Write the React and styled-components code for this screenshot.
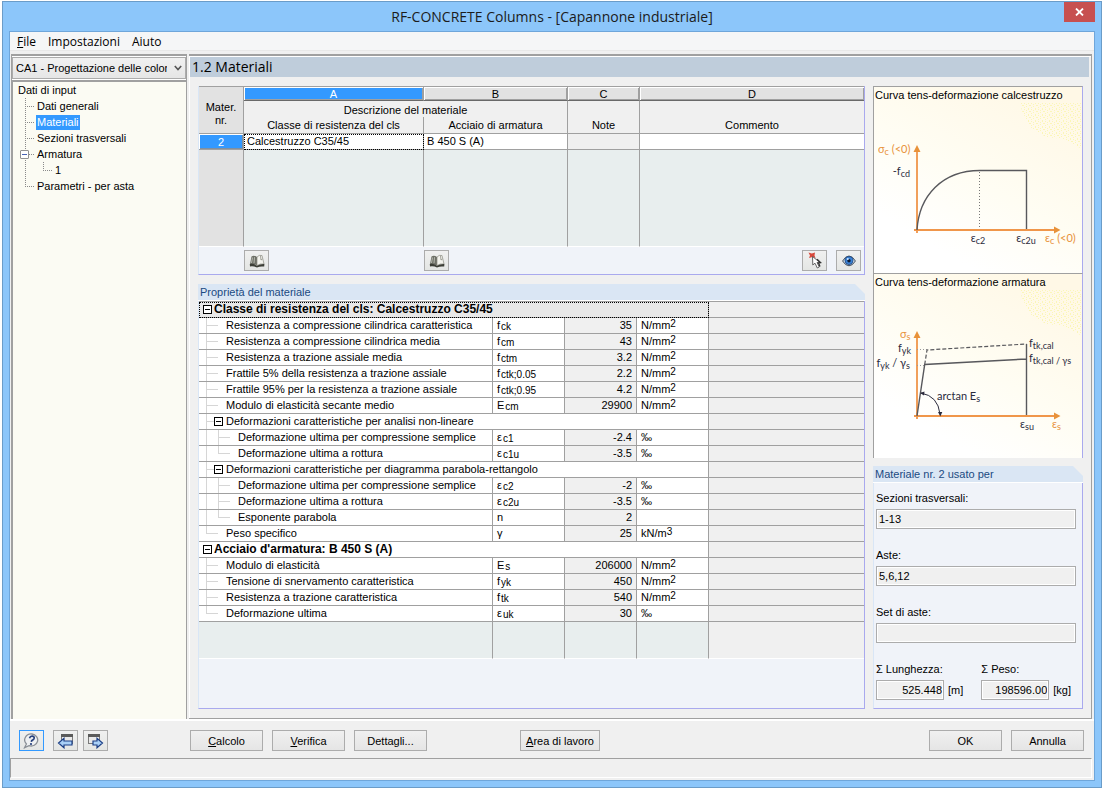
import { useState } from 'react';
import styled, { createGlobalStyle } from 'styled-components';

const GlobalStyle = createGlobalStyle`
    *{
        box-sizing: border-box;
    }
    body{
        margin:0;
        background-color: white;
        color:#000;
        font-family: 'Liberation Sans', Arial, sans-serif;
        font-size: 11px;
        line-height: 14px;
    }
    button, input, select{
        font:inherit;
        color:inherit;
        border-radius: 0;
        margin:0;
    }
`

const Page = styled.div`
    min-height: 100vh;
    padding: 1px 0 0 2px;
    display: flex;
`

const Window = styled.div`
    flex:1;
    min-width: 0;
    display: flex;
    flex-direction: column;
    padding: 0 6px 6px;
    border:1px solid #6b9cc8;
    background-color: #8cc6fa;
`

const TitleBar = styled.header`
    display: grid;
    grid-template-columns: 31px 1fr 31px;
    height: 29px;
    h1{
        margin:0;
        font-family: 'Open Sans', sans-serif;
        font-size: 14px;
        font-weight: 400;
        line-height: 29px;
        text-align: center;
        color:#1b1b1b;
    }
`

const CloseButton = styled.button`
    grid-column: 3;
    height: 20px;
    padding: 0;
    border:0;
    background-color: #c75050;
    display: flex;
    align-items: center;
    justify-content: center;
`

const Client = styled.div`
    flex:1;
    display: flex;
    flex-direction: column;
    border:1px solid #6fa6da;
    background-color: #f0f0f0;
`

const MenuBar = styled.nav`
    display: flex;
    gap: 12px;
    padding-left: 7px;
    height: 19px;
    background-color: #f5f6f7;
    border-bottom: 1px solid #e8e8e8;
    margin-bottom: 3px;
    a{
        font-family: 'Open Sans', sans-serif;
        font-size: 12px;
        line-height: 19px;
        color:#000;
        text-decoration: none;
    }
`

const Workspace = styled.div`
    flex:1;
    display: flex;
    gap: 2px;
    padding: 0 2px 0 1px;
    border-bottom: 2px solid white;
`

const Sidebar = styled.aside`
    width: 176px;
    display: flex;
    flex-direction: column;
    border-top: 2px solid #a0a0a0;
    border-left: 1px solid #a0a0a0;
    border-right: 1px solid #a0a0a0;
`

const CaseBox = styled.div`
    display: grid;
    padding: 1px 0;
    background-color: white;
    > *{
        grid-area: 1 / 1;
    }
    svg{
        justify-self: end;
        align-self: center;
        margin-right: 4px;
        pointer-events: none;
    }
`

const CaseSelect = styled.select`
    appearance: none;
    width: 100%;
    height: 22px;
    padding: 0 18px 0 3px;
    border:1px solid #acacac;
    background: linear-gradient(#f1f1f1, #e6e6e6);
`

const Tree = styled.ul`
    flex:1;
    margin:0;
    padding: 0 0 0 4px;
    list-style: none;
    border-top: 2px solid #a0a0a0;
    border-left: 1px solid #a0a0a0;
    background-color: #fbfbf3;
`

const dots = '#8a8a8a';

const TreeItem = styled.li`
    display: flex;
    align-items: center;
    height: 16px;
    padding-left: ${p => (p.$level ? '8px' : '0')};
    a{
        padding: 0 1px;
        line-height: 15px;
        color: ${p => (p.$active ? 'white' : '#000')};
        background-color: ${p => (p.$active ? '#3399ff' : 'transparent')};
        text-decoration: none;
    }
`

/* dotted connector: the stem on the left and an arm to the text */
const Stem = styled.span`
    width: ${p => (p.$wide ? '18px' : '11px')};
    height: 16px;
    background-image:
        repeating-linear-gradient(to bottom, ${dots} 0 1px, transparent 1px 2px),
        repeating-linear-gradient(to right, ${dots} 0 1px, transparent 1px 2px);
    background-repeat: no-repeat;
    background-size: 1px ${p => (p.$last ? '8px' : '16px')}, ${p => (p.$arm ? '9px' : '0')} 1px;
    background-position: 0 0, 0 8px;
`

/* pulled back over the stem it belongs to */
const NodeToggle = styled.button`
    width: 9px;
    height: 9px;
    padding: 0;
    margin: 0 7px 0 -16px;
    border:1px solid #919191;
    border-radius: 1px;
    background: linear-gradient(#4763b5, #4763b5) center / 5px 1px no-repeat white;
`

const Main = styled.main`
    flex:1;
    min-width: 0;
    display: flex;
    flex-direction: column;
    border-top: 2px solid #a0a0a0;
    border-right: 1px solid #a0a0a0;
    border-bottom: 1px solid #a0a0a0;
    box-shadow: inset 1px 1px white;
    padding: 1px 2px 0 1px;
    h2{
        margin:0;
        padding-left: 2px;
        background-color: #bfcddb;
        font-family: 'Open Sans', sans-serif;
        font-size: 14px;
        font-weight: 400;
        line-height: 20px;
    }
`

const Columns = styled.div`
    flex:1;
    display: flex;
    gap: 8px;
    padding: 9px 6px 9px 8px;
`

const Left = styled.div`
    flex:1;
    min-width: 0;
    display: flex;
    flex-direction: column;
    gap: 9px;
`

const Right = styled.div`
    width: 210px;
    display: flex;
    flex-direction: column;
`

const PanelBody = styled.div`
    flex: ${p => (p.$grow ? 1 : 'none')};
    border-right: 1px solid #a9a9ee;
    border-bottom: 1px solid #a9a9ee;
    border-left: 1px solid #d9e6f6;
    background-color: #f0f3f9;
`

const Panel = styled.section`
    flex: 1;
    display: flex;
    flex-direction: column;
    margin-top: ${p => (p.$spaced ? '8px' : '0')};
    h3{
        margin:0;
        padding-left: 2px;
        height: 17px;
        border-bottom: 1px solid white;
        background-color: #dae6f4;
        clip-path: polygon(0 0, calc(100% - 10px) 0, 100% 10px, 100% 100%, 0 100%);
        color:#1b4a82;
        font-size: 11px;
        font-weight: 400;
        line-height: 17px;
    }
`

const line = '1px solid #a0a0a0';

const Grid = styled.table`
    width: 100%;
    table-layout: fixed;
    border-collapse: separate;
    border-spacing: 0;
    border-top: ${line};
    th, td{
        padding: 0;
        font-weight: 400;
        border-right: ${line};
        border-bottom: ${line};
    }
    th:last-child, td:last-child{
        border-right: 0;
    }
`

const MaterialGrid = styled(Grid)`
    th{
        background-color: #f0f0f0;
        vertical-align: bottom;
        line-height: 16px;
    }
    td{
        height: 16px;
        line-height: 15px;
        padding: 0 3px;
        background-color: white;
    }
`

const Letter = styled.th`
    && {
        height: 14px;
        line-height: 12px;
        border-bottom: 1px solid #696969;
        box-shadow: inset 1px 1px white, inset -1px -1px #a0a0a0;
        color: ${p => (p.$active ? 'white' : '#000')};
        background-color: ${p => (p.$active ? '#3399ff' : '#e2e2e2')};
    }
`

const Corner = styled.th`
    && {
        background-color: #e2e2e2;
        line-height: 13px;
        padding-bottom: 6px;
    }
`

const GroupHead = styled.th`
    && {
        height: 16px;
        line-height: 14px;
        border-bottom: 0;
    }
`

const SubHead = styled.th`
    &&& {
        border-right: ${line};
    }
`

const RowNumber = styled.th`
    && {
        color:white;
        background-color: #3399ff;
        line-height: 14px;
        box-shadow: inset 1px 1px white, inset -1px -1px #7f8fa0;
    }
`

const Focused = styled.td`
    outline: 1px dotted #000;
    outline-offset: -1px;
`

const Locked = styled.td`
    && {
        background-color: #f0f0f0;
    }
`

const Filler = styled.tr`
    && td{
        height: ${p => (p.$tall ? '97px' : '37px')};
        background-color: #e8eeee;
        border-bottom: 1px solid white;
    }
    && td:first-child{
        background-color: ${p => (p.$tall ? '#e2e2e2' : '#e8eeee')};
    }
`

const GridTools = styled.div`
    display: grid;
    grid-template-columns: 45px 180px 1fr 25px 25px;
    align-items: center;
    height: 27px;
    padding-right: 3px;
    button:nth-of-type(1){
        grid-column: 2;
    }
    button:nth-of-type(3){
        grid-column: 4;
        margin-left: -9px;
    }
`

const IconButton = styled.button`
    width: 25px;
    height: 21px;
    padding: 0;
    display: flex;
    align-items: center;
    justify-content: center;
    border:1px solid #acacac;
    border-color: ${p => (p.$ready ? '#3399ff' : '#acacac')};
    background: linear-gradient(#f0f0f0, #e4e6e4);
`

const PropertyGrid = styled(Grid)`
    td, th{
        height: 16px;
        line-height: 15px;
        background-color: white;
        white-space: nowrap;
        text-align: left;
    }
    td{
        padding: 0 4px;
    }
    td:last-child{
        background-color: #f0f0f0;
    }
    td.value{
        text-align: right;
        background-color: #f0f0f0;
    }
    sub, sup{
        font-size: 10px;
        line-height: 0;
    }
    sub{
        margin-left: 1px;
        vertical-align: -1px;
    }
    sup{
        vertical-align: 2px;
    }
`

const Heading = styled.th`
    && {
        font-size: 12px;
        font-weight: 700;
        background-color: ${p => (p.$focus ? '#e8e8e8' : 'white')};
        outline: ${p => (p.$focus ? '1px dotted #000' : 'none')};
        outline-offset: -1px;
    }
`

const Name = styled.div`
    display: flex;
    align-items: center;
    height: 15px;
    padding-left: ${p => (p.$top ? '4px' : '7px')};
    gap: ${p => (p.$top ? '2px' : '0')};
`

const Guide = styled.span`
    width: ${p => (p.$short ? '8px' : '12px')};
    height: 15px;
    margin-right: ${p => (p.$leaf ? '8px' : '0')};
    background-image: linear-gradient(#d6d6d6, #d6d6d6), linear-gradient(#d6d6d6, #d6d6d6);
    background-repeat: no-repeat;
    background-size: 1px ${p => (p.$last ? '7px' : '15px')}, ${p => (p.$leaf || p.$short ? '12px' : '0')} 1px;
    background-position: 0 0, 0 7px;
`

const Fold = styled.button`
    flex: none;
    width: 9px;
    height: 9px;
    padding: 0;
    margin-right: ${p => (p.$sub ? '3px' : '0')};
    border:1px solid #000;
    background: linear-gradient(#000, #000) center / 5px 1px no-repeat white;
`

const Figure = styled.figure`
    margin:0;
    border-top: ${line};
    border-left: ${line};
    border-right: 1px solid #a9a9ee;
    background: linear-gradient(30deg, #fff 20%, #fffdf3 50%, #fff8e6 90%);
    figcaption{
        height: 16px;
        padding-left: 1px;
        line-height: 17px;
    }
    svg{
        display: block;
        width: 100%;
    }
    text{
        font-family: Lato, 'Open Sans', sans-serif;
        font-size: 11px;
        fill:#2b2b3d;
    }
    .axis{
        fill:#e8923a;
    }
    tspan.s{
        font-size: 9px;
    }
`

const Form = styled.form`
    display: flex;
    flex-direction: column;
    gap: 19px;
    padding: 8px 6px 4px 2px;
`

const Field = styled.div`
    display: flex;
    flex-direction: column;
    gap: 4px;
    label{
        white-space: nowrap;
    }
    input{
        width: ${p => (p.$short ? '68px' : '100%')};
        height: 20px;
        padding: 0 ${p => (p.$short ? '1px' : '2px')};
        border:1px solid #acacac;
        outline: 0;
        box-shadow: inset 0 0 0 1px white;
        background-color: #f0f0f0;
        text-align: ${p => (p.$short ? 'right' : 'left')};
    }
    div{
        display: flex;
        align-items: center;
        gap: 4px;
    }
`

const Sums = styled.div`
    display: flex;
    gap: 18px;
`

const ButtonBar = styled.div`
    display: flex;
    align-items: center;
    gap: 9px;
    height: 37px;
    padding: 2px 10px 0 9px;
`

const StepButtons = styled.div`
    display: flex;
    gap: 5px;
    margin-right: 73px;
`

const PushButton = styled.button`
    width: ${p => (p.$wide ? '80px' : '73px')};
    height: 21px;
    padding: 0;
    border:1px solid #acacac;
    background: linear-gradient(#f0f0f0, #e5e5e5);
    margin-left: ${p => (p.$wide ? '84px' : '0')};
    margin-right: ${p => (p.$wide ? 'auto' : '0')};
`

const StatusBar = styled.footer`
    height: 20px;
    margin: 0 2px 2px 0;
    border-top: ${line};
    border-left: ${line};
    border-right: 1px solid white;
    border-bottom: 1px solid white;
`

const navItems = [
    { label: 'Dati generali' },
    { label: 'Materiali' },
    { label: 'Sezioni trasversali' },
    { label: 'Armatura', open: true },
    { label: '1', nested: true },
    { label: 'Parametri - per asta', last: true },
];

const mpa = <>N/mm<sup>2</sup></>;

const properties = [
    { head: 'Classe di resistenza del cls: Calcestruzzo C35/45', focus: true },
    { name: 'Resistenza a compressione cilindrica caratteristica', sym: 'f', sub: 'ck', value: '35', unit: mpa },
    { name: 'Resistenza a compressione cilindrica media', sym: 'f', sub: 'cm', value: '43', unit: mpa },
    { name: 'Resistenza a trazione assiale media', sym: 'f', sub: 'ctm', value: '3.2', unit: mpa },
    { name: 'Frattile 5% della resistenza a trazione assiale', sym: 'f', sub: 'ctk;0.05', value: '2.2', unit: mpa },
    { name: 'Frattile 95% per la resistenza a trazione assiale', sym: 'f', sub: 'ctk;0.95', value: '4.2', unit: mpa },
    { name: 'Modulo di elasticità secante medio', sym: 'E', sub: 'cm', value: '29900', unit: mpa },
    { group: 'Deformazioni caratteristiche per analisi non-lineare' },
    { name: 'Deformazione ultima per compressione semplice', deep: true, sym: 'ε', sub: 'c1', value: '-2.4', unit: '‰' },
    { name: 'Deformazione ultima a rottura', deep: true, last: true, sym: 'ε', sub: 'c1u', value: '-3.5', unit: '‰' },
    { group: 'Deformazioni caratteristiche per diagramma parabola-rettangolo' },
    { name: 'Deformazione ultima per compressione semplice', deep: true, sym: 'ε', sub: 'c2', value: '-2', unit: '‰' },
    { name: 'Deformazione ultima a rottura', deep: true, sym: 'ε', sub: 'c2u', value: '-3.5', unit: '‰' },
    { name: 'Esponente parabola', deep: true, last: true, sym: 'n', value: '2' },
    { name: 'Peso specifico', last: true, sym: 'γ', value: '25', unit: <>kN/m<sup>3</sup></> },
    { head: "Acciaio d'armatura: B 450 S (A)" },
    { name: 'Modulo di elasticità', sym: 'E', sub: 's', value: '206000', unit: mpa },
    { name: 'Tensione di snervamento caratteristica', sym: 'f', sub: 'yk', value: '450', unit: mpa },
    { name: 'Resistenza a trazione caratteristica', sym: 'f', sub: 'tk', value: '540', unit: mpa },
    { name: 'Deformazione ultima', last: true, sym: 'ε', sub: 'uk', value: '30', unit: '‰' },
];

function BookIcon() {
  return (
    <svg width="16" height="14" viewBox="0 0 16 14">
        <path d="M1 10 L2.500 2.500 Q5 .8 8 3 L8 11.500 Q4.500 9.500 1 10Z" fill="#6d6f66"/>
        <path d="M3.500 3.500 L2.500 9 M5.500 3.200 L5 9.200" stroke="#b9bbb2" fill="none"/>
        <path d="M8 3 Q10 .6 13 1.500 L15 10 Q11 9.300 8 11.500Z" fill="#f4f4ee" stroke="#8b8b83" strokeWidth=".7"/>
        <path d="M11.500 1.800 L12 6 L13.500 5" stroke="#8b8b83" fill="none" strokeWidth=".8"/>
        <path d="M.8 10 Q5 9.200 8 11.800 Q11 9.800 15.400 10 L15.200 12.600 Q11 12 8 13.600 Q5 11.800 1 12.400Z" fill="#3c3e36"/>
    </svg>
  )
}

function PickIcon() {
  return (
    <svg width="16" height="17" viewBox="0 0 16 17">
        <path d="M1.500 .5 L4.800 1.600 L8 .5 L7.500 3.400 L8.500 6 L5.500 5 L2 6 L3 3.500Z" fill="#d8493c"/>
        <path d="M5.500 4.500 L5.800 13 L8 11.200 L10.300 16 L12.300 15 L10 10.500 L12.600 10.200Z" fill="#fff" stroke="#555" strokeWidth=".9"/>
        <path d="M10 7.200 L13.600 10.600 L11.500 11 L13 14.500" fill="none" stroke="#333" strokeWidth="1.300"/>
    </svg>
  )
}

function EyeIcon() {
  return (
    <svg width="14" height="12" viewBox="0 0 14 12">
        <path d="M.6 6 Q3.500 1 7 1 Q10.500 1 13.400 6 Q10.500 10.800 7 10.800 Q3.500 10.800 .6 6Z" fill="#d9e4ee" stroke="#3f4a57" strokeWidth="1"/>
        <circle cx="7" cy="5.600" r="4" fill="#3b82d6" stroke="#1d4379" strokeWidth=".8"/>
        <circle cx="7" cy="5.800" r="1.700" fill="#0d1c33"/>
        <circle cx="5.800" cy="4" r="1" fill="#cfe6ff"/>
    </svg>
  )
}

function HelpIcon() {
  return (
    <svg width="17" height="16" viewBox="0 0 17 16">
        <path d="M9 1 A6.500 6 0 1 1 6 12.600 L1.600 14.600 L3.400 11 A6.500 6 0 0 1 9 1Z" fill="#eef0f2" stroke="#8a8f96" strokeWidth="1.300"/>
        <path d="M6.500 5.200 Q7.200 3 9.400 3.200 Q11.800 3.500 11 5.600 Q10.500 6.700 9.200 7.300 Q8.500 7.700 8.400 8.800" fill="none" stroke="#26407c" strokeWidth="1.700"/>
        <circle cx="8" cy="11" r="1.100" fill="#26407c"/>
    </svg>
  )
}

function StepIcon({forward}) {
  return (
    <svg width="17" height="16" viewBox="0 0 17 16">
        <rect x={forward ? 1.5 : 4.5} y="1.500" width="11" height="9" fill="#e9e9e9" stroke="#7a7a7a"/>
        <rect x={forward ? 1 : 4} y="1" width="12" height="3" fill="#5a5a5a"/>
        <path
            d={forward ? 'M6 8 H10 V5.200 L15.500 10 L10 14.800 V12 H6Z' : 'M15 8 H7 V5.200 L1.500 10 L7 14.800 V12 H15Z'}
            fill="#a9d0f7" stroke="#1c3f86" strokeWidth="1.200"
        />
    </svg>
  )
}

function Speckles({id}) {
  return (
    <>
        <defs>
            <pattern id={id} width="7" height="6" patternUnits="userSpaceOnUse">
                <path d="M0 .5h1M3 .5h1M5 1.500h1M1 2.500h2M5 3.500h1M3 4.500h1M0 5.500h1" stroke="#fbf6b8"/>
            </pattern>
        </defs>
        <path d="M146 0 H208 V46 L190 36 L172 34 L156 24 L148 8Z" fill={`url(#${id})`}/>
    </>
  )
}

function Axes({tip, base}) {
  return (
    <>
        <path d={`M43 ${tip + 6} V${base + 3} M40 ${base} H181`} stroke="#f0964a" strokeWidth="1.800" fill="none"/>
        <path d={`M43 ${tip} L46.500 ${tip + 7} H39.500Z M186.500 ${base} L180 ${base - 3.5} V${base + 3.5}Z`} fill="#e8923a"/>
    </>
  )
}

function Label({x, y, base, sub, rest, tail, axis, anchor}) {
  return (
    <text x={x} y={y} textAnchor={anchor} className={axis ? 'axis' : undefined}>
        {base}<tspan className="s" dy="2">{sub}</tspan>
        {rest && <tspan dy="-2">{rest}</tspan>}
        {tail && <tspan className="s" dy="2">{tail}</tspan>}
    </text>
  )
}

function ConcreteCurve() {
  return (
    <Figure>
        <figcaption>Curva tens-deformazione calcestruzzo</figcaption>
        <svg viewBox="0 0 208 170">
            <Speckles id="grainA"/>
            <Axes tip={42} base={127}/>
            <path d="M43 127 C45 93 68 67.500 106 67.500 H152.500 V126" fill="none" stroke="#58585c" strokeWidth="1.400"/>
            <path d="M105.500 69 V126" stroke="#777" strokeDasharray="1 2"/>
            <Label x={4} y={50} base="σ" sub="c" rest=" (<0)" axis/>
            <Label x={36} y={72} base="-f" sub="cd" anchor="end"/>
            <Label x={104} y={139} base="ε" sub="c2" anchor="middle"/>
            <Label x={152} y={139} base="ε" sub="c2u" anchor="middle"/>
            <Label x={171} y={139} base="ε" sub="c" rest=" (<0)" axis/>
        </svg>
    </Figure>
  )
}

function SteelCurve() {
  return (
    <Figure>
        <figcaption>Curva tens-deformazione armatura</figcaption>
        <svg viewBox="0 0 208 168">
            <Speckles id="grainB"/>
            <Axes tip={41} base={126}/>
            <path d="M43 59.500 H53 M43 75.500 H50" stroke="#999" strokeDasharray="1 2"/>
            <path d="M43 126 L50.700 74.500 L152.500 69 M152.500 54 V125" fill="none" stroke="#58585c" strokeWidth="1.400"/>
            <path d="M50.700 74.500 L53 60 L152.500 54" fill="none" stroke="#58585c" strokeWidth="1.200" strokeDasharray="4 2"/>
            <path d="M47 103 Q64 106 66 124" fill="none" stroke="#2b2b3d"/>
            <path d="M46 103 L50.500 101.500 L50 105.500Z M66.300 126.500 L64 122 L68.300 122Z" fill="#2b2b3d"/>
            <Label x={26} y={48} base="σ" sub="s" axis/>
            <Label x={37} y={62} base="f" sub="yk" anchor="end"/>
            <Label x={36} y={77} base="f" sub="yk" rest=" / γ" tail="s" anchor="end"/>
            <Label x={63} y={110} base="arctan E" sub="s"/>
            <Label x={155} y={57} base="f" sub="tk,cal"/>
            <Label x={155} y={72} base="f" sub="tk,cal / γs"/>
            <Label x={146} y={138} base="ε" sub="su"/>
            <Label x={178} y={138} base="ε" sub="s" axis/>
        </svg>
    </Figure>
  )
}

function PropertyRow({row}) {
  if (row.head) {
    return (
      <tr>
          <Heading colSpan={4} $focus={row.focus}>
              <Name $top><Fold type='button' aria-label={row.head}/>{row.head}</Name>
          </Heading>
          <td/>
      </tr>
    )
  }
  if (row.group) {
    return (
      <tr>
          <th colSpan={4}>
              <Name><Guide $short/><Fold type='button' $sub aria-label={row.group}/>{row.group}</Name>
          </th>
          <td/>
      </tr>
    )
  }
  return (
    <tr>
        <th>
            <Name>
                {row.deep && <Guide/>}
                <Guide $leaf $last={row.last}/>
                {row.name}
            </Name>
        </th>
        <td>{row.sym}{row.sub && <sub>{row.sub}</sub>}</td>
        <td className='value'>{row.value}</td>
        <td>{row.unit}</td>
        <td/>
    </tr>
  )
}

export default function App() {
  const [active, setActive] = useState('Materiali');

  return (
    <Page>
        <GlobalStyle/>
        <Window>
            <TitleBar>
                <span/>
                <h1>RF-CONCRETE Columns - [Capannone industriale]</h1>
                <CloseButton aria-label='Chiudi'>
                    <svg width="9" height="8" viewBox="0 0 9 8">
                        <path d="M1 .5 L8 7.500 M8 .5 L1 7.500" stroke="#fff" strokeWidth="1.800"/>
                    </svg>
                </CloseButton>
            </TitleBar>
            <Client>
                <MenuBar>
                    <a href='#file'><u>F</u>ile</a>
                    <a href='#impostazioni'>Impostazioni</a>
                    <a href='#aiuto'>Aiuto</a>
                </MenuBar>
                <Workspace>
                    <Sidebar>
                        <CaseBox>
                            <CaseSelect aria-label='Caso'>
                                <option>CA1 - Progettazione delle colonne</option>
                            </CaseSelect>
                            <svg width="8" height="6" viewBox="0 0 8 6">
                                <path d="M.8 1 L4 4.500 L7.200 1" fill="none" stroke="#555" strokeWidth="1.600"/>
                            </svg>
                        </CaseBox>
                        <Tree>
                            <TreeItem><a href='#input'>Dati di input</a></TreeItem>
                            {navItems.map(item => (
                                <TreeItem key={item.label} $level $active={item.label === active}>
                                    {item.nested && <Stem $wide/>}
                                    <Stem $arm $last={item.nested || item.last}/>
                                    {item.open && <NodeToggle aria-label='Comprimi'/>}
                                    <a href={'#' + item.label} onClick={() => setActive(item.label)}>{item.label}</a>
                                </TreeItem>
                            ))}
                        </Tree>
                    </Sidebar>
                    <Main>
                        <h2>1.2 Materiali</h2>
                        <Columns>
                            <Left>
                                <PanelBody>
                                    <MaterialGrid>
                                        <colgroup>
                                            <col width='45'/><col width='180'/><col width='144'/><col width='72'/><col/>
                                        </colgroup>
                                        <thead>
                                            <tr>
                                                <Corner rowSpan={3}>Mater.<br/>nr.</Corner>
                                                <Letter $active>A</Letter>
                                                <Letter>B</Letter>
                                                <Letter>C</Letter>
                                                <Letter>D</Letter>
                                            </tr>
                                            <tr>
                                                <GroupHead colSpan={2}>Descrizione del materiale</GroupHead>
                                                <th rowSpan={2}>Note</th>
                                                <th rowSpan={2}>Commento</th>
                                            </tr>
                                            <tr>
                                                <SubHead>Classe di resistenza del cls</SubHead>
                                                <SubHead>Acciaio di armatura</SubHead>
                                            </tr>
                                        </thead>
                                        <tbody>
                                            <tr>
                                                <RowNumber>2</RowNumber>
                                                <Focused>Calcestruzzo C35/45</Focused>
                                                <td>B 450 S (A)</td>
                                                <Locked/>
                                                <td/>
                                            </tr>
                                            <Filler $tall><td/><td/><td/><td/><td/></Filler>
                                        </tbody>
                                    </MaterialGrid>
                                    <GridTools>
                                        <IconButton aria-label='Libreria calcestruzzo'><BookIcon/></IconButton>
                                        <IconButton aria-label='Libreria acciaio'><BookIcon/></IconButton>
                                        <IconButton aria-label='Seleziona'><PickIcon/></IconButton>
                                        <IconButton aria-label='Visualizza'><EyeIcon/></IconButton>
                                    </GridTools>
                                </PanelBody>
                                <Panel>
                                    <h3>Proprietà del materiale</h3>
                                    <PanelBody $grow>
                                        <PropertyGrid>
                                            <colgroup>
                                                <col width='294'/><col width='72'/><col width='72'/><col width='72'/><col/>
                                            </colgroup>
                                            <tbody>
                                                {properties.map((row, i) => <PropertyRow key={i} row={row}/>)}
                                                <Filler><td/><td/><td/><td/><td/></Filler>
                                            </tbody>
                                        </PropertyGrid>
                                    </PanelBody>
                                </Panel>
                            </Left>
                            <Right>
                                <ConcreteCurve/>
                                <SteelCurve/>
                                <Panel $spaced>
                                    <h3>Materiale nr. 2 usato per</h3>
                                    <PanelBody $grow>
                                        <Form>
                                            <Field>
                                                <label htmlFor='sezioni'>Sezioni trasversali:</label>
                                                <input id='sezioni' readOnly value='1-13'/>
                                            </Field>
                                            <Field>
                                                <label htmlFor='aste'>Aste:</label>
                                                <input id='aste' readOnly value='5,6,12'/>
                                            </Field>
                                            <Field>
                                                <label htmlFor='set'>Set di aste:</label>
                                                <input id='set' readOnly value=''/>
                                            </Field>
                                            <Sums>
                                                <Field $short>
                                                    <label htmlFor='lunghezza'>Σ Lunghezza:</label>
                                                    <div><input id='lunghezza' readOnly value='525.448'/>[m]</div>
                                                </Field>
                                                <Field $short>
                                                    <label htmlFor='peso'>Σ Peso:</label>
                                                    <div><input id='peso' readOnly value='198596.00'/>[kg]</div>
                                                </Field>
                                            </Sums>
                                        </Form>
                                    </PanelBody>
                                </Panel>
                            </Right>
                        </Columns>
                    </Main>
                </Workspace>
                <ButtonBar>
                    <IconButton $ready aria-label='Guida'><HelpIcon/></IconButton>
                    <StepButtons>
                        <IconButton aria-label='Indietro'><StepIcon/></IconButton>
                        <IconButton aria-label='Avanti'><StepIcon forward/></IconButton>
                    </StepButtons>
                    <PushButton><u>C</u>alcolo</PushButton>
                    <PushButton><u>V</u>erifica</PushButton>
                    <PushButton>Dettagli...</PushButton>
                    <PushButton $wide><u>A</u>rea di lavoro</PushButton>
                    <PushButton>OK</PushButton>
                    <PushButton>Annulla</PushButton>
                </ButtonBar>
                <StatusBar/>
            </Client>
        </Window>
    </Page>
  )
}
